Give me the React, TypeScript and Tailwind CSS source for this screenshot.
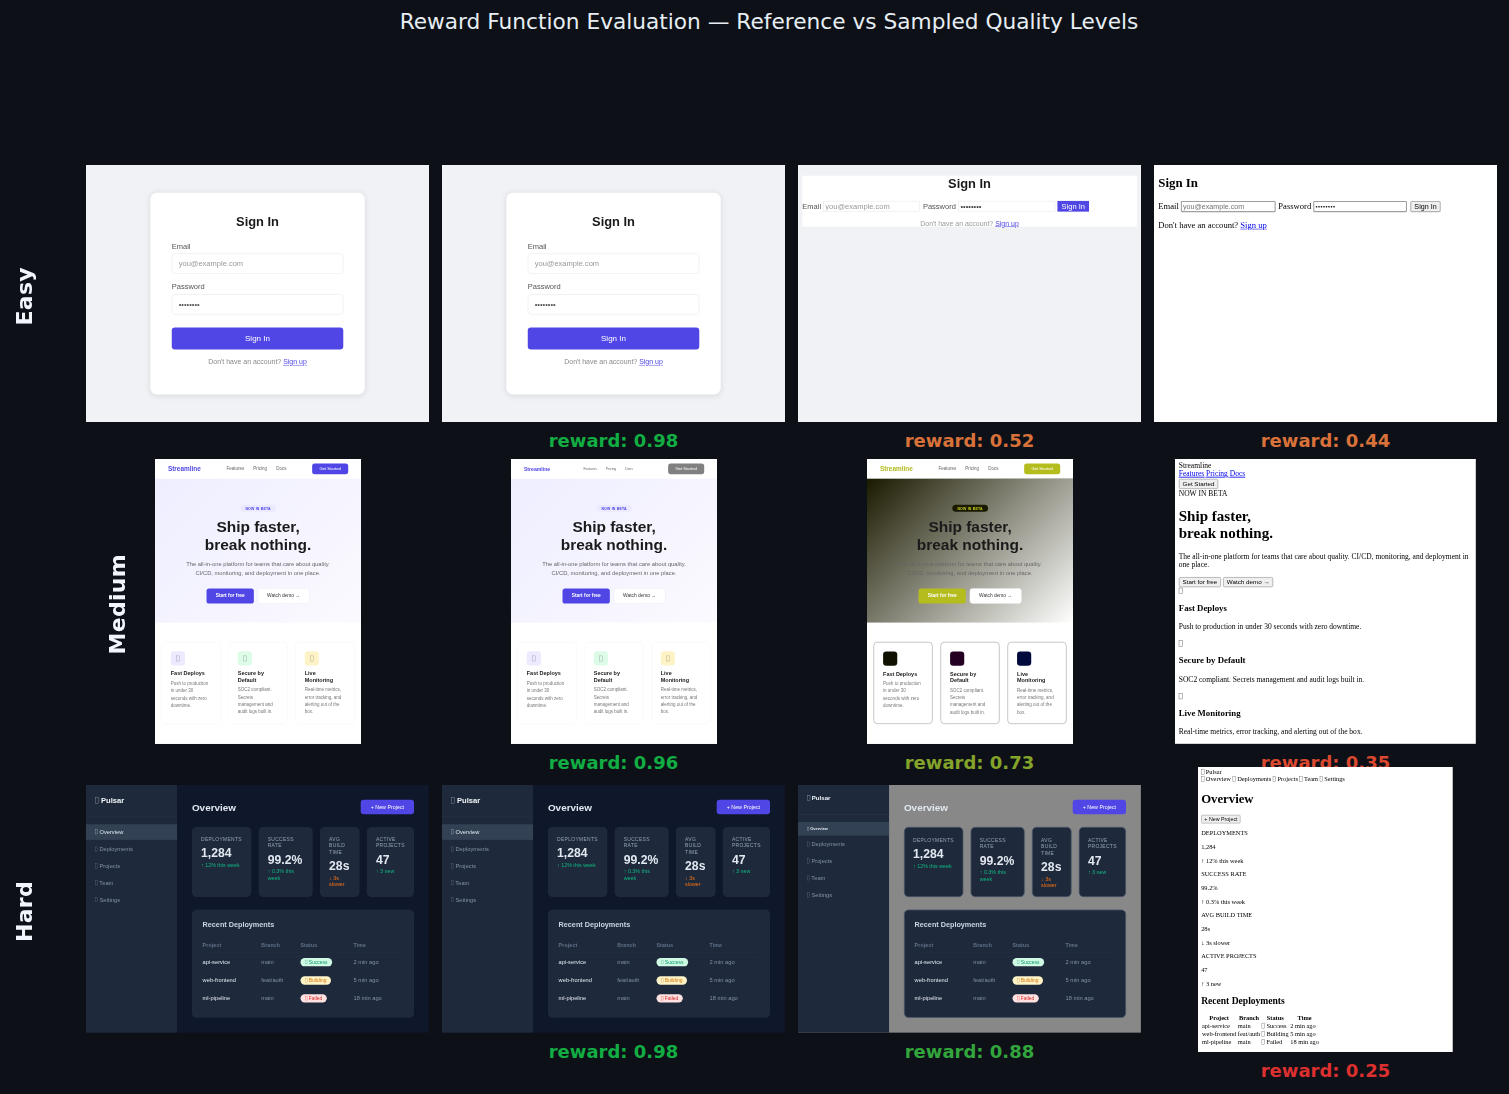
import React from 'react';

const Tofu = ({ className = '' }: { className?: string }) => (
  <span className={`inline-block w-[0.48em] h-[0.85em] border border-current opacity-60 align-[-0.05em] ${className}`} />
);

const Reward = ({ value, className }: { value: string; className: string }) => (
  <div className={`mt-[7px] leading-[24px] text-[18px] font-bold font-['DejaVu_Sans',sans-serif] ${className}`}>
    reward: {value}
  </div>
);

// ---- Easy row ----

const LoginCard = () => (
  <div className="w-[640px] h-[480px] bg-[#f0f2f5] flex items-start justify-center pt-[52px] font-['Liberation_Sans',sans-serif]">
    <div className="w-[400px] h-[376px] bg-white rounded-[12px] shadow-[0_2px_12px_rgba(0,0,0,0.1)] px-[40px] pt-[40px]">
      <h1 className="text-[24px] font-bold text-[#1a1a1a] text-center leading-[27px] mb-[24px]">Sign In</h1>
      <label className="block text-[14px] leading-[16px] text-[#555] mb-[6px]">Email</label>
      <input
        placeholder="you@example.com"
        className="block w-[320px] h-[38px] px-[12px] mb-[16px] text-[14px] text-[#333] placeholder:text-[#999] border border-[#e4e6ea] rounded-[6px] outline-none"
      />
      <label className="block text-[14px] leading-[16px] text-[#555] mb-[6px]">Password</label>
      <input
        type="password"
        readOnly
        value="password"
        className="block w-[320px] h-[38px] px-[12px] mb-[24px] text-[14px] text-[#555] border border-[#e4e6ea] rounded-[6px] outline-none"
      />
      <button className="block w-[320px] h-[41px] bg-[#4f46e5] text-white text-[15px] rounded-[6px]">Sign In</button>
      <p className="mt-[16px] text-center text-[13px] leading-[16px] text-[#888]">
        Don't have an account? <a className="text-[#4f46e5] underline">Sign up</a>
      </p>
    </div>
  </div>
);

const LoginFlat = () => (
  <div className="w-[640px] h-[480px] bg-[#f0f2f5] pt-[20px] px-[8px] font-['Liberation_Sans',sans-serif]">
    <div className="bg-white h-[95px]">
      <h1 className="text-[24px] font-bold text-[#1a1a1a] text-center leading-[27px]">Sign In</h1>
      <div className="flex items-center mt-[20px] h-[20px]">
        <label className="text-[14px] text-[#555] w-[39px]">Email</label>
        <input
          placeholder="you@example.com"
          className="w-[180px] h-[20px] px-[3px] text-[14px] placeholder:text-[#999] border border-[#e8e8e8] outline-none"
        />
        <label className="text-[14px] text-[#555] ml-[6px] w-[66px]">Password</label>
        <input
          type="password"
          readOnly
          value="password"
          className="w-[181px] h-[20px] px-[3px] text-[14px] text-[#444] border border-[#e8e8e8] outline-none"
        />
        <button className="ml-[4px] w-[59px] h-[20px] bg-[#4f46e5] text-white text-[14px]">Sign In</button>
      </div>
      <p className="mt-[14px] text-center text-[13px] leading-[16px] text-[#999]">
        Don't have an account? <a className="text-[#4f46e5] underline">Sign up</a>
      </p>
    </div>
  </div>
);

const LoginBare = () => (
  <div className="w-[640px] h-[480px] bg-white px-[8px] pt-[20px] font-['Liberation_Serif',serif] text-black">
    <h2 className="text-[24px] font-bold leading-[27px] mb-[20px]">Sign In</h2>
    <div className="flex items-center h-[21px] text-[16px]">
      <label className="w-[42px]">Email</label>
      <input
        placeholder="you@example.com"
        className="w-[177px] h-[21px] px-[2px] font-['Liberation_Sans',sans-serif] text-[13.33px] placeholder:text-[#757575] border-2 border-[#a0a0a0] rounded-[2px] outline-none"
      />
      <label className="ml-[5px] w-[65px]">Password</label>
      <input
        type="password"
        readOnly
        value="password"
        className="w-[175px] h-[21px] px-[2px] text-[13.33px] border-2 border-[#a0a0a0] rounded-[2px] outline-none"
      />
      <button className="ml-[6px] w-[57px] h-[21px] bg-[#efefef] border-2 border-[#b4b4b4] rounded-[3px] font-['Liberation_Sans',sans-serif] text-[13.33px]">
        Sign In
      </button>
    </div>
    <p className="mt-[16px] text-[16px] leading-[18px]">
      Don't have an account? <a className="text-[#0000ee] underline">Sign up</a>
    </p>
  </div>
);

// ---- Medium row ----

const features = [
  { title: 'Fast Deploys', text: 'Push to production in under 30 seconds with zero downtime.' },
  { title: 'Secure by Default', text: 'SOC2 compliant. Secrets management and audit logs built in.' },
  { title: 'Live Monitoring', text: 'Real-time metrics, error tracking, and alerting out of the box.' },
];

type LandingStyle = {
  logo: string;
  links: string;
  cta: string;
  nav: string;
  hero: string;
  badge: string;
  sub: string;
  primary: string;
  ghost: string;
  card: string;
  icons: string[];
};

const landingBase: LandingStyle = {
  logo: 'text-[20px] text-[#4f46e5]',
  links: 'text-[14px] gap-[28px]',
  cta: 'bg-[#4f46e5]',
  nav: 'border-b border-[#f4f4f8]',
  hero: 'bg-[linear-gradient(135deg,#eeeeff_0%,#fbfaff_100%)]',
  badge: 'bg-[#ebe9fe] text-[#4f46e5]',
  sub: 'text-[#666]',
  primary: 'bg-[#4f46e5]',
  ghost: 'border border-[#e2e2ea]',
  card: 'border border-[#f0f0f0]',
  icons: ['bg-[#ede9fe]', 'bg-[#dcfce7]', 'bg-[#fef3c7]'],
};

const landingSmallNav: LandingStyle = {
  ...landingBase,
  logo: 'text-[16px] text-[#4f46e5]',
  links: 'text-[10.5px] gap-[28px] pl-[20px] pr-[26px]',
  cta: 'bg-[#808080]',
};

const landingOlive: LandingStyle = {
  logo: 'text-[20px] text-[#aebb1c]',
  links: 'text-[14px] gap-[28px]',
  cta: 'bg-[#b5bd1e]',
  nav: 'border-b-2 border-[#9a9a94]',
  hero: 'bg-[linear-gradient(135deg,#1a1a00_0%,#ffffff_100%)]',
  badge: 'bg-[#1a1a00] text-[#c6ce1e]',
  sub: 'text-[#666]',
  primary: 'bg-[#b5bd1e]',
  ghost: 'border border-[#e8e8e8]',
  card: 'border-2 border-[#a8a8a8]',
  icons: ['bg-[#111100]', 'bg-[#240022]', 'bg-[#000a3c]'],
};

const Landing = ({ look, showTofu = true }: { look: LandingStyle; showTofu?: boolean }) => (
  <div className="w-[640px] h-[885px] bg-white font-['Liberation_Sans',sans-serif]">
    <nav className={`h-[62px] px-[40px] flex items-center justify-between ${look.nav}`}>
      <span className={`font-bold ${look.logo}`}>Streamline</span>
      <div className={`flex text-[#666] ${look.links}`}>
        <a>Features</a>
        <a>Pricing</a>
        <a>Docs</a>
      </div>
      <button className={`w-[112px] h-[33px] rounded-[8px] text-white text-[13px] ${look.cta}`}>Get Started</button>
    </nav>
    <section className={`h-[446px] pt-[80px] flex flex-col items-center text-center ${look.hero}`}>
      <span className={`w-[111px] h-[22px] rounded-full text-[11px] font-bold tracking-[0.5px] leading-[22px] ${look.badge}`}>
        NOW IN BETA
      </span>
      <h1 className="mt-[17px] text-[48px] font-bold leading-[57.6px] text-[#1a1a1a]">
        Ship faster,
        <br />
        break nothing.
      </h1>
      <p className={`mt-[16px] text-[18px] leading-[29px] w-[520px] ${look.sub}`}>
        The all-in-one platform for teams that care about quality.
        <br />
        CI/CD, monitoring, and deployment in one place.
      </p>
      <div className="mt-[32px] flex gap-[12px]">
        <button className={`w-[147px] h-[47px] rounded-[8px] text-white text-[15px] font-bold ${look.primary}`}>
          Start for free
        </button>
        <button className={`w-[161px] h-[47px] rounded-[8px] bg-white text-[#333] text-[15px] ${look.ghost}`}>
          Watch demo →
        </button>
      </div>
    </section>
    <section className="px-[20px] pt-[60px] grid grid-cols-3 gap-[24px]">
      {features.map((f, i) => (
        <div key={f.title} className={`h-[255px] rounded-[12px] bg-white pt-[28px] px-[28px] ${look.card}`}>
          <div className={`w-[44px] h-[44px] rounded-[10px] flex items-center justify-center text-[20px] text-[#444] ${look.icons[i]}`}>
            {showTofu && <Tofu />}
          </div>
          <h3 className="mt-[16px] text-[17px] font-bold leading-[20.7px] text-[#1a1a1a]">{f.title}</h3>
          <p className="mt-[8px] text-[14px] leading-[22.4px] text-[#777]">{f.text}</p>
        </div>
      ))}
    </section>
  </div>
);

const DefaultButton = ({ children }: { children: React.ReactNode }) => (
  <button className="h-[22px] px-[6px] bg-[#efefef] border-2 border-[#b4b4b4] rounded-[3px] font-['Liberation_Sans',sans-serif] text-[13.33px] leading-none align-middle text-black">
    {children}
  </button>
);

const LandingBare = () => (
  <div className="w-[640px] h-[606px] bg-white px-[8px] pt-[5px] font-['Liberation_Serif',serif] text-[16px] leading-[18.4px] text-black">
    <div>Streamline</div>
    <div className="text-[#0000ee] underline">
      <a>Features</a> <a>Pricing</a> <a>Docs</a>
    </div>
    <DefaultButton>Get Started</DefaultButton>
    <div>NOW IN BETA</div>
    <h1 className="mt-[21px] mb-[21px] text-[32px] font-bold leading-[36.8px]">
      Ship faster,
      <br />
      break nothing.
    </h1>
    <p className="mb-[16px]">The all-in-one platform for teams that care about quality. CI/CD, monitoring, and deployment in one place.</p>
    <div className="flex gap-[4px]">
      <DefaultButton>Start for free</DefaultButton>
      <DefaultButton>Watch demo →</DefaultButton>
    </div>
    {features.map(f => (
      <div key={f.title}>
        <div className="h-[18.4px]">
          <Tofu />
        </div>
        <h3 className="mt-[15px] mb-[20.7px] text-[18.72px] font-bold leading-[21.5px]">{f.title}</h3>
        <p className="mb-[18px]">{f.text}</p>
      </div>
    ))}
  </div>
);

// ---- Hard row ----

const navItems = ['Overview', 'Deployments', 'Projects', 'Team', 'Settings'];

const stats = [
  { label: 'Deployments', value: '1,284', delta: '↑ 12% this week', up: true },
  { label: 'Success Rate', value: '99.2%', delta: '↑ 0.3% this week', up: true },
  { label: 'Avg Build Time', value: '28s', delta: '↓ 3s slower', up: false },
  { label: 'Active Projects', value: '47', delta: '↑ 3 new', up: true },
];

const rows = [
  { project: 'api-service', branch: 'main', status: 'Success', badge: 'bg-[#d1fae5] text-[#059669] w-[83px]', time: '2 min ago' },
  { project: 'web-frontend', branch: 'feat/auth', status: 'Building', badge: 'bg-[#fef3c7] text-[#d97706] w-[80px]', time: '5 min ago' },
  { project: 'ml-pipeline', branch: 'main', status: 'Failed', badge: 'bg-[#fee2e2] text-[#dc2626] w-[69px]', time: '18 min ago' },
];

const Dashboard = ({ degraded = false }: { degraded?: boolean }) => (
  <div className={`w-[900px] h-[650px] flex font-['Liberation_Sans',sans-serif] ${degraded ? 'bg-[#888]' : 'bg-[#0f172a]'}`}>
    <aside className="w-[239px] bg-[#1e293b] shrink-0">
      <div className={`px-[24px] flex items-center border-b border-[#334155] font-bold text-[#f1f5f9] ${degraded ? 'h-[77px] text-[16px] pb-[6px]' : 'h-[82px] text-[20px]'}`}>
        <span>
          <Tofu /> Pulsar
        </span>
      </div>
      <ul className={degraded ? 'mt-[20px]' : 'mt-[21px]'}>
        {navItems.map((item, i) => (
          <li
            key={item}
            className={`px-[24px] flex items-center ${
              i === 0
                ? degraded
                  ? 'h-[36px] mb-[1px] bg-[#334155] text-[#e2e8f0] text-[10.5px] font-bold'
                  : 'h-[41px] mb-[3px] bg-[#334155] text-[#e2e8f0] text-[15px]'
                : 'h-[44px] text-[#8392a8] text-[15px]'
            } ${i > 0 && degraded ? 'mb-[0.4px]' : ''}`}
          >
            <span>
              <Tofu /> {item}
            </span>
          </li>
        ))}
      </ul>
    </aside>
    <main className="flex-1 pl-[39px] pr-[40px] pt-[39px]">
      <header className="h-[38px] mb-[33px] flex items-center justify-between">
        <h1 className="text-[26px] font-bold text-[#e2e8f0]">Overview</h1>
        <button className="w-[140px] h-[38px] rounded-[8px] bg-[#4f46e5] text-white text-[14px]">+ New Project</button>
      </header>
      <div className="grid grid-cols-[156px_142px_104px_124px] gap-x-[19px]">
        {stats.map(s => (
          <div key={s.label} className={`h-[184px] rounded-[12px] bg-[#1e293b] pt-[24px] ${degraded ? 'border-2 border-[#4a5568] px-[22px] pt-[22px]' : 'px-[24px]'}`}>
            <div className="text-[13px] leading-[17px] tracking-[0.8px] uppercase text-[#94a3b8]">{s.label}</div>
            <div className="mt-[10px] text-[32px] leading-[37px] font-bold text-[#e2e8f0]">{s.value}</div>
            <div className={`mt-[4px] text-[14px] leading-[17px] ${s.up ? 'text-[#10b981]' : 'text-[#f97316]'}`}>{s.delta}</div>
          </div>
        ))}
      </div>
      <section className={`mt-[33px] h-[284px] rounded-[12px] bg-[#1e293b] ${degraded ? 'border-2 border-[#4a5568] px-[26px] pt-[26px]' : 'px-[28px] pt-[28px]'}`}>
        <h2 className="text-[19px] leading-[22px] font-bold text-[#cbd5e1]">Recent Deployments</h2>
        <div className="mt-[34px] grid grid-cols-[154px_103px_139px_1fr] items-center h-[30px] border-b border-[#273449] pb-[10px] text-[13.5px] tracking-[0.5px] font-bold text-[#64748b]">
          <span>Project</span>
          <span>Branch</span>
          <span>Status</span>
          <span>Time</span>
        </div>
        {rows.map(r => (
          <div key={r.project} className="grid grid-cols-[154px_103px_139px_1fr] items-center h-[47.6px] text-[15px]">
            <span className="text-[#e2e8f0]">{r.project}</span>
            <span className="text-[#8392a8]">{r.branch}</span>
            <span>
              <span className={`inline-flex h-[22px] items-center justify-center rounded-full text-[13px] ${r.badge}`}>
                <span>
                  <Tofu /> {r.status}
                </span>
              </span>
            </span>
            <span className="text-[#8392a8]">{r.time}</span>
          </div>
        ))}
      </section>
    </main>
  </div>
);

const DashBare = () => (
  <div className="w-[640px] h-[716px] bg-white px-[8px] pt-[4px] font-['Liberation_Serif',serif] text-[16px] leading-[18.4px] text-black">
    <div>
      <Tofu /> Pulsar
    </div>
    <div>
      {navItems.map(n => (
        <span key={n}>
          <Tofu /> {n}{' '}
        </span>
      ))}
    </div>
    <h1 className="mt-[21px] mb-[21px] text-[32px] font-bold leading-[36.8px]">Overview</h1>
    <DefaultButton>+ New Project</DefaultButton>
    {stats.map(s => (
      <div key={s.label}>
        <p className="mt-[16px] uppercase">{s.label}</p>
        <p className="mt-[16px]">{s.value}</p>
        <p className="mt-[16px]">{s.delta}</p>
      </div>
    ))}
    <h2 className="mt-[20px] mb-[20px] text-[24px] font-bold leading-[27.6px]">Recent Deployments</h2>
    <div className="grid grid-cols-[auto_auto_auto_auto] w-max gap-x-[4px] px-[2px]">
      {['Project', 'Branch', 'Status', 'Time'].map(h => (
        <span key={h} className="text-center font-bold h-[20px]">{h}</span>
      ))}
      {rows.map(r => (
        <React.Fragment key={r.project}>
          <span className="h-[20.5px]">{r.project}</span>
          <span>{r.branch}</span>
          <span>
            <Tofu /> {r.status}
          </span>
          <span>{r.time}</span>
        </React.Fragment>
      ))}
    </div>
  </div>
);

// ---- Figure ----

const Thumb = ({ box, inner, children }: { box: string; inner: string; children: React.ReactNode }) => (
  <div className={`overflow-hidden shrink-0 blur-[0.6px] ${box}`}>
    <div className={`origin-top-left w-max ${inner}`}>{children}</div>
  </div>
);

const wide = 'w-[343px] h-[257px]';
const easy = 'scale-[0.536]';

const RowLabel = ({ text, className = '' }: { text: string; className?: string }) => (
  <div className={`flex items-center ${className}`}>
    <span className="[writing-mode:vertical-rl] rotate-180 text-[22px] font-bold text-[#f0f6fc] font-['DejaVu_Sans',sans-serif] tracking-[0.3px]">
      {text}
    </span>
  </div>
);

const App = () => {
  return (
    <div className="w-[1509px] h-[1094px] overflow-hidden bg-[#0d1117]">
      <h1 className="h-[165px] pt-[8px] pl-[29px] text-center text-[21.7px] leading-[28px] text-[#e6edf3] font-['DejaVu_Sans',sans-serif]">
        Reward Function Evaluation — Reference vs Sampled Quality Levels
      </h1>

      <div className="h-[294px] grid grid-cols-[73px_343px_343px_343px_343px] gap-x-[13px]">
        <RowLabel text="Easy" className="h-[257px] pl-[8px] pt-[6px]" />
        <div className="flex flex-col items-center">
          <Thumb box={wide} inner={easy}><LoginCard /></Thumb>
        </div>
        <div className="flex flex-col items-center">
          <Thumb box={wide} inner={easy}><LoginCard /></Thumb>
          <Reward value="0.98" className="text-[#12ad43]" />
        </div>
        <div className="flex flex-col items-center">
          <Thumb box={wide} inner={easy}><LoginFlat /></Thumb>
          <Reward value="0.52" className="text-[#d9713a]" />
        </div>
        <div className="flex flex-col items-center">
          <Thumb box={wide} inner={easy}><LoginBare /></Thumb>
          <Reward value="0.44" className="text-[#d9713a]" />
        </div>
      </div>

      <div className="h-[326px] grid grid-cols-[73px_343px_343px_343px_343px] gap-x-[13px]">
        <RowLabel text="Medium" className="h-[285px] w-[73px] pl-[101px] pt-[6px]" />
        <div className="flex flex-col items-center">
          <Thumb box="w-[206px] h-[285px]" inner="scale-[0.322]"><Landing look={landingBase} /></Thumb>
        </div>
        <div className="flex flex-col items-center">
          <Thumb box="w-[206px] h-[285px]" inner="scale-[0.322]"><Landing look={landingSmallNav} /></Thumb>
          <Reward value="0.96" className="text-[#12ad43]" />
        </div>
        <div className="flex flex-col items-center">
          <Thumb box="w-[206px] h-[285px]" inner="scale-[0.322]"><Landing look={landingOlive} showTofu={false} /></Thumb>
          <Reward value="0.73" className="text-[#84a32a]" />
        </div>
        <div className="flex flex-col items-center">
          <Thumb box="w-[301px] h-[285px]" inner="scale-[0.47]"><LandingBare /></Thumb>
          <Reward value="0.35" className="text-[#d9482f]" />
        </div>
      </div>

      <div className="grid grid-cols-[73px_343px_343px_343px_343px] gap-x-[13px]">
        <RowLabel text="Hard" className="h-[248px] pl-[8px] pt-[6px]" />
        <div className="flex flex-col items-center">
          <Thumb box="w-[343px] h-[248px]" inner="scale-[0.381]"><Dashboard /></Thumb>
        </div>
        <div className="flex flex-col items-center">
          <Thumb box="w-[343px] h-[248px]" inner="scale-[0.381]"><Dashboard /></Thumb>
          <Reward value="0.98" className="text-[#12ad43]" />
        </div>
        <div className="flex flex-col items-center">
          <Thumb box="w-[343px] h-[248px]" inner="scale-[0.381]"><Dashboard degraded /></Thumb>
          <Reward value="0.88" className="text-[#33a53d]" />
        </div>
        <div className="flex flex-col items-center -mt-[18px] relative z-10">
          <Thumb box="w-[255px] h-[285px]" inner="scale-[0.398]"><DashBare /></Thumb>
          <Reward value="0.25" className="text-[#dc2f2f]" />
        </div>
      </div>
    </div>
  );
};

export default App;
